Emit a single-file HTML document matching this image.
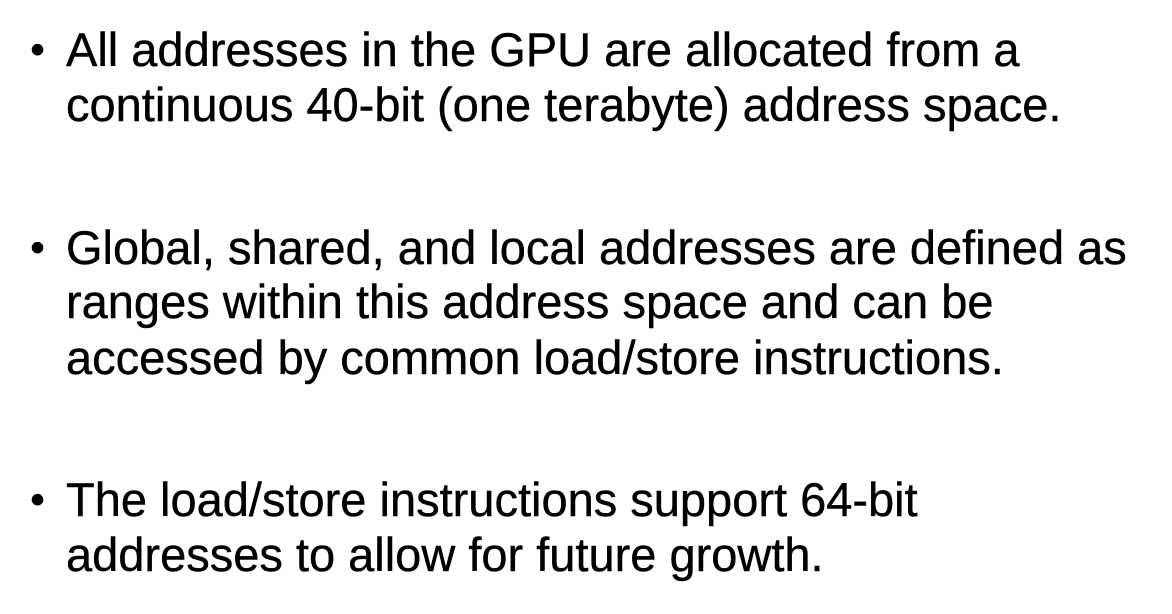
<!DOCTYPE html>
<html><head><style>
html,body{margin:0;padding:0;background:#fff;}
body{width:1172px;height:614px;position:relative;overflow:hidden;font-family:"Liberation Sans",sans-serif;color:#000;}
.l{position:absolute;left:66px;font-size:47px;line-height:54px;white-space:nowrap;-webkit-text-stroke:0.4px #000;}
.b{position:absolute;left:30px;font-size:43px;line-height:54px;}
</style></head><body>
<div class="b" style="top:23px">•</div>
<div class="l" style="top:23px">All addresses in the GPU are allocated from a</div>
<div class="l" style="top:78px">continuous 40-bit (one terabyte) address space.</div>
<div class="b" style="top:221px">•</div>
<div class="l" style="top:221px">Global, shared, and local addresses are defined as</div>
<div class="l" style="top:275px">ranges within this address space and can be</div>
<div class="l" style="top:331px">accessed by common load/store instructions.</div>
<div class="b" style="top:473px">•</div>
<div class="l" style="top:473px">The load/store instructions support 64-bit</div>
<div class="l" style="top:528px">addresses to allow for future growth.</div>
</body></html>
